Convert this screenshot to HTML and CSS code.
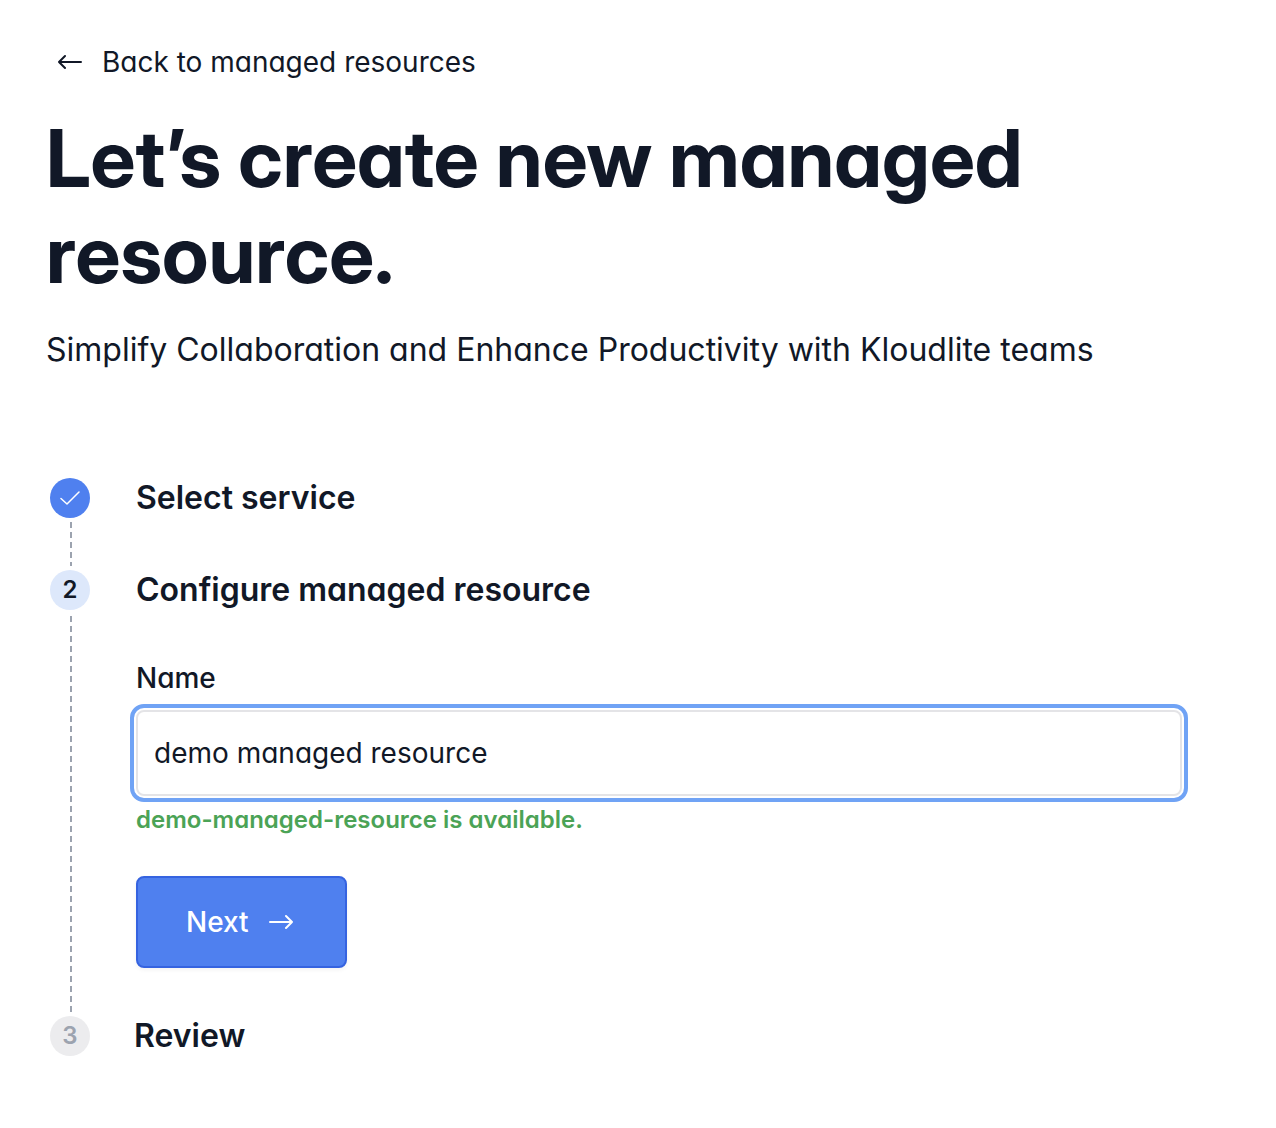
FILE: index.html
```html
<!DOCTYPE html>
<html lang="en">
<head>
<meta charset="utf-8">
<meta name="viewport" content="width=device-width, initial-scale=1">
<title>Create managed resource</title>
<link rel="stylesheet" href="styles.css">
</head>
<body>
<main class="page">
  <a class="back" href="#">
    <svg class="arrow" viewBox="0 0 24 16" aria-hidden="true"><path d="M23 8H1M7 2L1 8l6 6"/></svg>
    <span>Back to managed resources</span>
  </a>
  <h1 class="title">Let’s create new managed resource.</h1>
  <p class="subtitle">Simplify Collaboration and Enhance Productivity with Kloudlite teams</p>
  <ol class="steps">
    <li class="step">
      <div class="rail">
        <span class="marker marker-done"><svg class="check" viewBox="0 0 20 14" aria-label="Done"><path d="M1 7.500l6 5.500L19 1"/></svg></span>
        <span class="line"></span>
      </div>
      <div class="step-body"><h2 class="step-title">Select service</h2></div>
    </li>
    <li class="step">
      <div class="rail">
        <span class="marker marker-current">2</span>
        <span class="line line-long"></span>
      </div>
      <form class="step-body">
        <h2 class="step-title">Configure managed resource</h2>
        <label class="label" for="name">Name</label>
        <input class="input" id="name" type="text" value="demo managed resource">
        <p class="message">demo-managed-resource is available.</p>
        <button class="button" type="button">
          <span>Next</span>
          <svg class="arrow" viewBox="0 0 24 16" aria-hidden="true"><path d="M1 8h22M17 2l6 6-6 6"/></svg>
        </button>
      </form>
    </li>
    <li class="step step-compact">
      <div class="rail"><span class="marker marker-next">3</span></div>
      <div class="step-body"><h2 class="step-title">Review</h2></div>
    </li>
  </ol>
</main>
</body>
</html>
```
FILE: styles.css
```css
* { box-sizing: border-box; }
body {
  margin: 0;
  background: #fff;
  color: #111827;
  font-family: Inter, "Liberation Sans", sans-serif;
  font-feature-settings: "cv11";
}
h1, h2, p, ol { margin: 0; padding: 0; }
.page { padding: 42px 94px 48px 46px; }
.back {
  display: inline-flex;
  align-items: center;
  gap: 20px;
  padding-left: 12px;
  color: inherit;
  font-size: 28px;
  line-height: 40px;
  text-decoration: none;
}
.arrow {
  width: 24px;
  height: 16px;
  fill: none;
  stroke: currentColor;
  stroke-width: 2;
  stroke-linecap: round;
  stroke-linejoin: round;
}
.title {
  margin-top: 28px;
  font-family: "Inter Display", Inter, "Liberation Sans", sans-serif;
  font-variation-settings: "opsz" 32;
  font-size: 80px;
  line-height: 96px;
  font-weight: 700;
}
.subtitle {
  margin-top: 24px;
  font-size: 32px;
  line-height: 48px;
  font-variation-settings: "opsz" 16;
}
.steps { margin-top: 104px; list-style: none; }
.step { display: flex; gap: 46px; padding-left: 4px; }
.step-compact { gap: 44px; }
.rail {
  display: flex;
  flex-direction: column;
  align-items: center;
  width: 40px;
}
.marker {
  display: grid;
  flex: none;
  place-items: center;
  width: 40px;
  height: 40px;
  border-radius: 50%;
  font-size: 24px;
  line-height: 40px;
  font-weight: 600;
}
.marker-done { background: #4f80ef; color: #fff; }
.marker-current { background: #dde8fb; }
.marker-next { background: #ececee; color: #9ca3af; }
.check {
  width: 20px;
  height: 14px;
  fill: none;
  stroke: currentColor;
  stroke-width: 1.5;
  stroke-linecap: round;
  stroke-linejoin: round;
}
.line {
  flex: 1;
  width: 2px;
  margin: 4px 0 4px 2px;
  background: repeating-linear-gradient(#9ca3af 0 6px, transparent 6px 10px);
}
.line-long { margin-top: 6px; }
.step-body { flex: 1; padding-bottom: 48px; }
.step-title {
  font-size: 32px;
  line-height: 40px;
  font-weight: 600;
  font-variation-settings: "opsz" 16;
}
.step:first-child .step-body { padding-bottom: 52px; }
.label {
  display: block;
  margin-top: 48px;
  font-size: 28px;
  line-height: 40px;
  font-weight: 500;
}
.input {
  display: block;
  width: 100%;
  height: 86px;
  margin-top: 12px;
  padding: 0 16px;
  border: 2px solid #e4e4e7;
  border-radius: 8px;
  outline: 4px solid #70a3f5;
  outline-offset: 2px;
  background: #fff;
  color: inherit;
  font: 400 28px/40px Inter, "Liberation Sans", sans-serif;
  font-feature-settings: inherit;
}
.message {
  margin-top: 8px;
  color: #4ba356;
  font-size: 24px;
  line-height: 32px;
  font-weight: 600;
}
.button {
  display: inline-flex;
  align-items: center;
  gap: 20px;
  height: 92px;
  margin-top: 40px;
  padding: 0 52px 0 48px;
  border: 2px solid #3563e0;
  border-radius: 8px;
  background: #4f80ef;
  box-shadow: 0 2px 4px rgb(0 0 0 / 5%);
  color: #fff;
  font: 500 28px/40px Inter, "Liberation Sans", sans-serif;
}
```
